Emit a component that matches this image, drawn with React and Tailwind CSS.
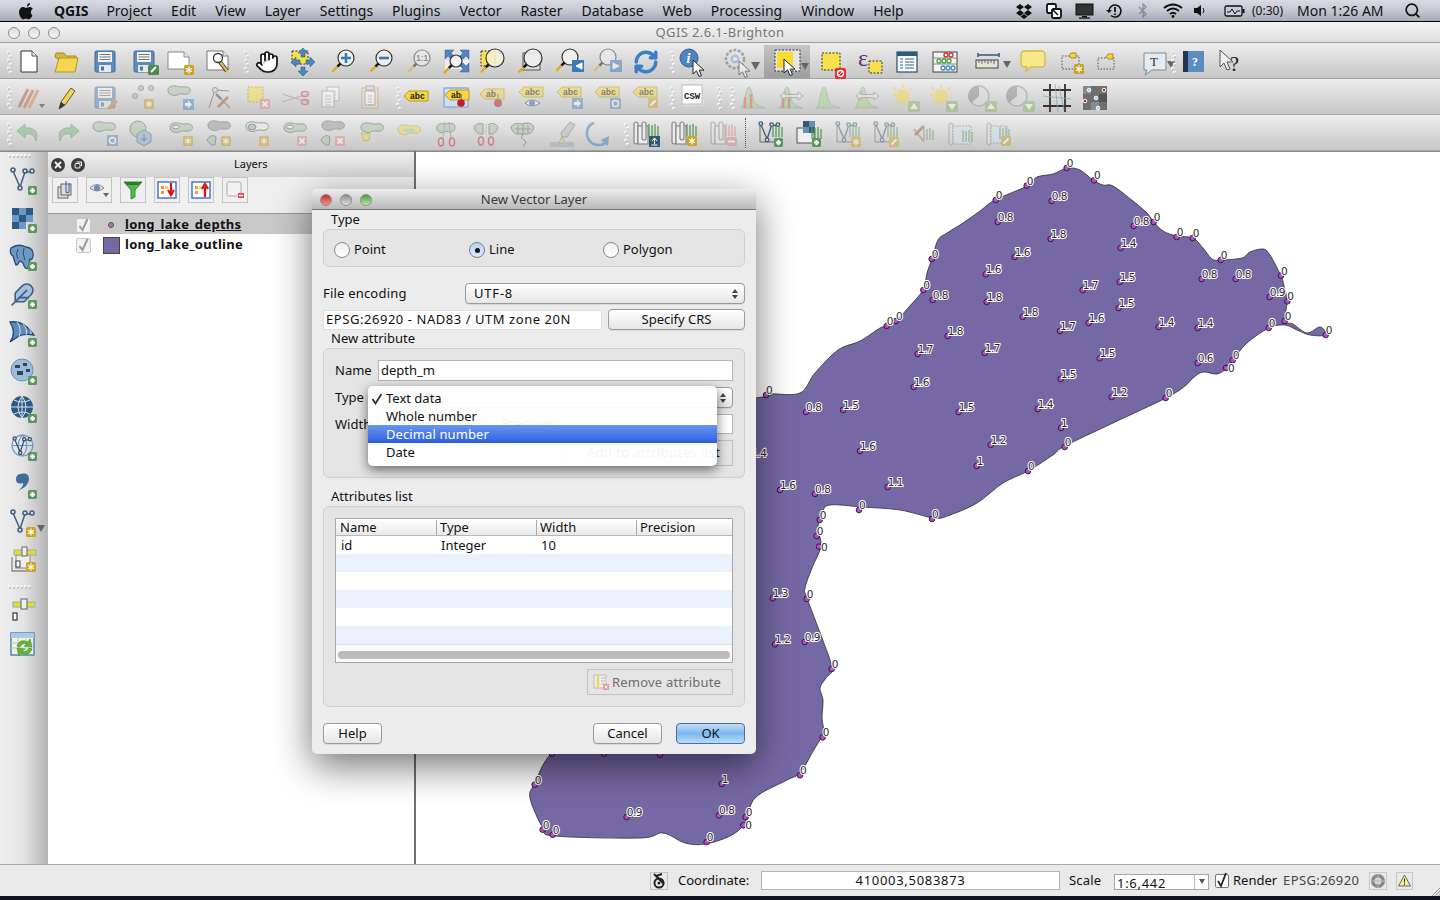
import React from 'react';
import { Hand, Feather, Globe, RefreshCw, Search } from 'lucide-react';

const Ic = ({ o, children }) => (
  <svg width="32" height="32" viewBox="0 0 32 32" className={o ? 'overflow-visible opacity-50' : 'overflow-visible'}>{children}</svg>
);
const It = ({ m = 'ml-[6px]', children }) => <div className={`w-[32px] h-[32px] flex-none ${m}`}>{children}</div>;
const Grip = ({ m = '' }) => (
  <svg width="6" height="24" viewBox="0 0 6 24" className={`flex-none ${m}`}>
    {[1, 5, 9, 13, 17, 21].map((y) => <g key={y}><rect x={y % 8 === 1 ? 0 : 2} y={y} width="3" height="2.4" fill="#f7f7f7" /><rect x={y % 8 === 1 ? 1 : 3} y={y + 1.6} width="2" height="1" fill="#aaa" /></g>)}
  </svg>
);
const Tr = ({ x = 0, y = 0, children }) => <g transform={`translate(${x} ${y})`}>{children}</g>;
const BP = ({ x = 21, y = 21 }) => <Tr x={x} y={y}><rect width="9" height="9" rx="1.5" fill="#5c965c" /><path d="M4.5 2v5M2 4.5h5" stroke="#fff" strokeWidth="2" /></Tr>;
const BS = ({ x = 20, y = 20 }) => <Tr x={x} y={y}><rect width="10" height="10" rx="1.5" fill="#cda323" /><path d="M5 1.5v7M2 3.2l6 3.6M8 3.2L2 6.8" stroke="#fff" strokeWidth="1.2" /></Tr>;
const BX = ({ x = 20, y = 20 }) => <Tr x={x} y={y}><rect width="10" height="10" fill="#e58d8d" /><path d="M2.5 2.5l5 5M7.5 2.5l-5 5" stroke="#fff" strokeWidth="1.8" /></Tr>;
const BA = ({ x = 20, y = 20, d = 1, c = '#5a8fc6' }) => <Tr x={x} y={y}><rect width="11" height="11" fill={c} /><path d={d > 0 ? 'M2 4h3V1.5l4 4-4 4V7H2z' : 'M9 4H6V1.5l-4 4 4 4V7h3z'} fill="#fff" /></Tr>;
const BE = ({ x = 20, y = 20, c = '#d5b863' }) => <Tr x={x} y={y}><rect width="10" height="10" rx="1" fill={c} /><path d="M2.5 7.5l5-5" stroke="#fff" strokeWidth="2" /></Tr>;
const Mag = ({ cx = 19, cy = 12, r = 8, f = '#f2f2f2', s = '#333' }) => {
  const X = Number(cx) - Number(r) * 0.7;
  const Y = Number(cy) + Number(r) * 0.7;
  return (
    <g>
      <circle cx={cx} cy={cy} r={r} fill={f} fillOpacity=".85" stroke={s} strokeWidth="1.2" />
      <path d={`M${X} ${Y}L${X - 3} ${Y + 3}`} stroke="#111" strokeWidth="2.6" />
      <path d={`M${X - 3} ${Y + 3}L${X - 8} ${Y + 8}`} stroke="#e3a922" strokeWidth="2.6" />
    </g>
  );
};
const Floppy = ({ c = '#5c8bbd' }) => (
  <g>
    <rect x="6" y="5" width="20" height="21" rx="1.5" fill={c} stroke="#3e6a98" />
    <rect x="9" y="6" width="14" height="10" fill="#f4f4f4" />
    <path d="M10.5 8.5h11M10.5 11h11M10.5 13.500h11" stroke="#777" />
    <rect x="10" y="19" width="12" height="7" fill="#e8e8e8" />
    <rect x="12" y="20.500" width="3" height="4" fill="#4a78a8" />
  </g>
);
const Cursor = ({ x = 14, y = 12, s = 1 }) => <g transform={`translate(${x} ${y}) scale(${s})`}><path d="M0 0v14l3.500-3.200L6 16.500l2.500-1-2.400-5.300H11z" fill="#fff" stroke="#222" strokeWidth="1" /></g>;
const Arrow = ({ x = 34, y = 17 }) => <path d={`M${x - 4} ${y}h8l-4 7z`} fill="#666" />;
const Dashed = ({ x = 6, y = 6, w = 18, h = 18, f = '#f7e14b', c = '#333' }) => <rect x={x} y={y} width={w} height={h} fill={f} stroke={c} strokeDasharray="2 1.500" />;
const Blob = ({ x = 2, y = 4, f = '#a7cba2', s = '#666' }) => <Tr x={x} y={y}><path d="M1 5C1 1 7 0 11 1.500C15 3 21 0 23 4C25 8 20 10 16 9C12 8 9 12 5 10C2 9 1 8 1 5Z" fill={f} stroke={s} /></Tr>;
const Tag = ({ t = 'abc', f = '#f6d741', x = 2, y = 9, c = '#222' }) => (
  <Tr x={x} y={y}>
    <path d="M0 5l5-5h19v10H5z" fill={f} stroke="#b99b20" />
    <text x="6" y="8.200" fontSize="8.500" fontWeight="700" fill={c} fontFamily="Liberation Sans">{t}</text>
  </Tr>
);
const Vee = ({ x = 4, y = 2, c = '#3f5f80', s = 1 }) => (
  <g transform={`translate(${x} ${y}) scale(${s})`} fill="none" stroke={c} strokeWidth="1.500">
    <path d="M2 4l7 16L14 5h6" />
    <circle cx="2" cy="3" r="2" fill="#ddd" /><circle cx="9" cy="21" r="2" fill="#ddd" /><circle cx="14" cy="4" r="2" fill="#ddd" /><circle cx="21" cy="4" r="2" fill="#ddd" />
  </g>
);
const Roll = ({ c = '#888' }) => (
  <g fill="#e8e8e8" stroke={c} strokeWidth="1.200">
    <rect x="5" y="4" width="4" height="22" rx="2" /><rect x="9" y="8" width="10" height="18" fill="#eee" /><rect x="13" y="4" width="4" height="18" rx="2" />
  </g>
);
const Grass = ({ x = 19, y = 6, c = '#5b9a5b' }) => <path transform={`translate(${x} ${y})`} d="M1 0v12M4 1v11M7 0v12M10 2v10" stroke={c} strokeWidth="1.300" />;
const Hist = ({ r }) => (
  <g>
    <path d="M4 26C8 26 8 5 12 5C15 5 15 18 18 21C20 24 24 25 28 26Z" fill="#a7d58e" stroke="#8a9" />
    {r && <path d="M8 15v11M14 12v14" stroke="#dc6050" strokeWidth="2.500" />}
  </g>
);
const HArrow = () => <path d="M5 14l5-4v2.500h13V10l5 4-5 4v-2.500H10V18z" fill="#eee" fillOpacity=".8" stroke="#888" />;
const Sun = ({ up }) => (
  <g>
    <g stroke="#f3d54a" strokeWidth="1.800"><path d="M14 2v4M14 22v3M3 13h4M4 5l3 3M24 5l-3 3M5 21l3-3" /></g>
    <circle cx="14" cy="14" r="7" fill="#f5d84a" />
    <rect x="19" y="19" width="12" height="11" rx="1.500" fill="#8fb96f" />
    <path d={up ? 'M25 21l4 6h-8z' : 'M25 28l4-6h-8z'} fill="#fff" />
  </g>
);
const Contrast = ({ up }) => (
  <g>
    <circle cx="13" cy="14" r="10" fill="#ddd" stroke="#999" strokeWidth="1.500" />
    <path d="M13 14L5 21A10 10 0 0 1 13 4z" fill="#888" />
    <rect x="19" y="19" width="12" height="11" rx="1.500" fill="#8fb96f" />
    <path d={up ? 'M25 21l4 6h-8z' : 'M25 28l4-6h-8z'} fill="#fff" />
  </g>
);
const Scissors = ({ x = 0, y = 0, c = '#d05050' }) => (
  <Tr x={x} y={y}>
    <path d="M2 6l26 8M2 14l26-8" stroke="#999" strokeWidth="1.300" />
    <ellipse cx="25" cy="6" rx="3.500" ry="2.500" fill="none" stroke={c} strokeWidth="1.500" /><ellipse cx="25" cy="14" rx="3.500" ry="2.500" fill="none" stroke={c} strokeWidth="1.500" />
  </Tr>
);
const DocLines = ({ x = 0, y = 0, w = 14, h = 18, c = '#999' }) => (
  <Tr x={x} y={y}><rect width={w} height={h} fill="#fff" stroke={c} /><path d={`M3 5h${w - 6}M3 8h${w - 6}M3 11h${w - 6}M3 14h${w - 6}`} stroke={c} strokeWidth=".8" /></Tr>
);

const R1 = [
  ['ml-0', <Ic><path d="M8 5h11l5 5v16H8z" fill="#fff" stroke="#333" /><path d="M19 5v5h5" fill="#eee" stroke="#555" /></Ic>],
  ['ml-[5px]', <Ic><path d="M5 11l1-4h8l2 3h10v3H8z" fill="#d9b93a" stroke="#a88c20" /><path d="M9 12h19l-3 14H5z" fill="#f6d650" stroke="#b3951f" /></Ic>],
  ['ml-[7px]', <Ic><Floppy /></Ic>],
  ['ml-[7px]', <Ic><Floppy /><rect x="20" y="19" width="11" height="10" rx="1.500" fill="#4d8b4d" /><path d="M23 26l5-5" stroke="#fff" strokeWidth="2" /></Ic>],
  ['ml-[5px]', <Ic><path d="M3 6h16l5 5v12H3z" fill="#fff" stroke="#888" /><path d="M19 6v5h5" fill="#eee" stroke="#888" /><BS x="19" y="19" /></Ic>],
  ['ml-[6px]', <Ic><path d="M4 5h16l5 5v14H4z" fill="#fff" stroke="#777" /><path d="M20 5v5h5" fill="#eee" stroke="#777" /><circle cx="15" cy="12" r="4.500" fill="none" stroke="#333" strokeWidth="1.300" /><path d="M17 16l7 9" stroke="#333" strokeWidth="4" /><path d="M17.500 16.500l7 9" stroke="#e0bb5a" strokeWidth="2.400" /></Ic>],
  'g:ml-[9px]',
  ['ml-0', <Ic><Hand x="5" y="4" width="24" height="24" fill="#fff" stroke="#111" strokeWidth="1.700" /></Ic>],
  ['ml-[5px]', <Ic><Dashed x="5" y="5" w="16" h="13" /><g fill="#4f86c0" stroke="#2e5f94" strokeWidth=".6"><path d="M16 2l5 5h-3v4h-4V7h-3z" /><path d="M16 30l-5-5h3v-4h4v4h3z" /><path d="M4 16l5-5v3h4v4H9v3z" /><path d="M28 16l-5-5v3h-4v4h4v3z" /></g></Ic>],
  ['ml-[7px]', <Ic><Mag cx="20" cy="12" r="8" /><path d="M15 12h10M20 7v10" stroke="#3a78b8" strokeWidth="2.600" /></Ic>],
  ['ml-[6px]', <Ic><Mag cx="20" cy="12" r="8" /><path d="M15 12h10" stroke="#3a78b8" strokeWidth="2.600" /></Ic>],
  ['ml-[6px]', <Ic o><Mag cx="20" cy="12" r="8" /><text x="14" y="15" fontSize="8.500" fontWeight="700" fill="#444" fontFamily="Liberation Sans">1:1</text></Ic>],
  ['ml-[7px]', <Ic><path d="M11 8h10v6h7v9H4v-9h7z" fill="#eee" /><g fill="#4f86c0" stroke="#2f6094" strokeWidth=".5"><path d="M4 4h9l-3 3 3 3-3 3-3-3-3 3z" /><path d="M28 4h-9l3 3-3 3 3 3 3-3 3 3z" /><path d="M28 26h-9l3-3-3-3 3-3 3 3 3-3z" /></g><Mag cx="15" cy="15" r="6" /></Ic>],
  ['ml-[5px]', <Ic><Dashed x="3" y="5" w="14" h="15" /><Mag cx="17" cy="12" r="9" f="#f6f3d8" /></Ic>],
  ['ml-[6px]', <Ic><rect x="7" y="7" width="17" height="17" fill="#ddd" stroke="#555" /><Mag cx="17" cy="12" r="9" f="#eee" /></Ic>],
  ['ml-[6px]', <Ic><Mag cx="16" cy="11" r="8" /><rect x="18" y="14" width="12" height="12" fill="#3f7ab8" /><path d="M28 17l-6 3 6 3z" fill="#fff" stroke="#fff" /></Ic>],
  ['ml-[6px]', <Ic o><Mag cx="16" cy="11" r="8" /><rect x="18" y="14" width="12" height="12" fill="#3f7ab8" /><path d="M21 17l6 3-6 3z" fill="#fff" stroke="#fff" /></Ic>],
  ['ml-[6px]', <Ic><RefreshCw x="3" y="3" width="26" height="26" stroke="#3a80c8" strokeWidth="3.200" /></Ic>],
  'g:ml-[8px]',
  ['ml-px', <Ic><circle cx="12" cy="12" r="9" fill="#4f84be" stroke="#2e5f94" /><text x="9.500" y="17" fontSize="14" fontWeight="700" fontStyle="italic" fill="#fff" fontFamily="Liberation Serif">i</text><Cursor x="16" y="14" /></Ic>],
  ['ml-[12px]', <><Ic o><circle cx="14" cy="13" r="9" fill="#dde6f0" stroke="#666" strokeWidth="2.500" strokeDasharray="3 1.500" /><circle cx="14" cy="13" r="4.500" fill="#7ea8d2" /><path d="M12.500 10.500l4.500 2.500-4.500 2.500z" fill="#fff" /><Cursor x="18" y="15" /></Ic><svg width="1" height="1" className="overflow-visible -mt-[16px] ml-[30px] block"><path d="M0 0h9l-4.500 8z" fill="#666" /></svg></>],
];
const R1b = [
  ['ml-[6px]', <Ic><Dashed x="6" y="7" w="18" h="17" /><rect x="19" y="22" width="11" height="11" fill="#d33" rx="1.500" /><circle cx="24.500" cy="27.500" r="3" fill="none" stroke="#fff" strokeWidth="1.300" /><path d="M22.500 29.500l4-4" stroke="#fff" /></Ic>],
  ['ml-[6px]', <Ic><text x="4" y="20" fontSize="24" fontStyle="normal" fill="#6a2c80" fontFamily="Liberation Serif">ε</text><Dashed x="15" y="15" w="13" h="12" /></Ic>],
  ['ml-[5px]', <Ic><rect x="6" y="6" width="20" height="20" fill="#fff" stroke="#2f5a80" strokeWidth="1.300" /><rect x="6" y="6" width="20" height="4" fill="#2f5a80" /><path d="M9 13h3M9 16h3M9 19h3M9 22h3M14 13h9M14 16h9M14 19h9M14 22h9" stroke="#2f5a80" /></Ic>],
  ['ml-[6px]', <Ic><rect x="4" y="6" width="24" height="20" fill="#f3f3f3" stroke="#444" /><path d="M4 12h24M4 18h24" stroke="#888" /><g fill="none" strokeWidth="1.300"><g stroke="#c33"><circle cx="17" cy="9" r="2" /><circle cx="22" cy="9" r="2" /></g><g stroke="#4a4"><circle cx="10" cy="15" r="2" /><circle cx="15" cy="15" r="2" /><circle cx="20" cy="15" r="2" /></g><g stroke="#48c"><circle cx="14" cy="22" r="2" /><circle cx="19" cy="22" r="2" /><circle cx="24" cy="22" r="2" /></g></g></Ic>],
  ['ml-[12px]', <Ic><path d="M5 9h21M5 7v4M26 7v4" stroke="#2f5a80" strokeWidth="1.500" /><rect x="3" y="14" width="22" height="8" fill="#e6e6d8" stroke="#444" /><path d="M6 14v3M9 14v4M12 14v3M15 14v4M18 14v3M21 14v4" stroke="#444" strokeWidth=".8" /><Arrow x="34" y="15" /></Ic>],
  ['ml-[12px]', <Ic><path d="M8 5h16q4 0 4 4v8q0 4-4 4H14l-5 4 1-4H8q-4 0-4-4V9q0-4 4-4z" fill="#f9e88b" stroke="#d4b84a" strokeWidth="1.300" /></Ic>],
  ['ml-[8px]', <Ic><rect x="5" y="10" width="17" height="13" fill="none" stroke="#555" strokeDasharray="1.500 1.500" /><path d="M14 7h5v5h-5l-2-2z" fill="#f5d435" stroke="#a88c20" /><BS x="17" y="18" /></Ic>],
  ['ml-[3px]', <Ic><rect x="6" y="12" width="16" height="11" fill="none" stroke="#555" strokeDasharray="1.500 1.500" /><path d="M16 8h5v5h-5l-2-2z" fill="#f5d435" stroke="#a88c20" /></Ic>],
  ['ml-[15px]', <Ic><path d="M5 7h22v17H13l-7 5 2-5H5z" fill="#e2ecf2" stroke="#888" /><text x="11" y="20" fontSize="13" fill="#333" fontFamily="Liberation Serif">T</text><Arrow x="32" y="15" /></Ic>],
  'g:ml-[13px]',
  ['ml-0', <Ic><rect x="6" y="5" width="21" height="21" fill="#5c8bbd" /><rect x="6" y="5" width="5" height="21" fill="#1f3550" /><text x="15" y="20" fontSize="12" fontWeight="700" fill="#fff" fontFamily="Liberation Serif">?</text></Ic>],
  ['ml-[6px]', <Ic><path d="M5 4v17l4-4 3 7 3-1-3-7h6z" fill="#eee" stroke="#555" /><text x="15" y="25" fontSize="20" fill="#111" fontFamily="Liberation Serif">?</text></Ic>],
];
const R2 = [
  ['ml-px', <Ic o><g strokeWidth="3"><path d="M5 25L14 7" stroke="#a64" /><path d="M10 26L19 8" stroke="#c63" /><path d="M15 26L24 8" stroke="#d84" /></g><path d="M25 22h6l-3 4z" fill="#333" /></Ic>],
  ['ml-[4px]', <Ic><path d="M9 27l2-7L21 6l4 3-10 14z" fill="#f5d64a" stroke="#554" /><path d="M9 27l2-7 4 3z" fill="#333" /></Ic>],
  ['ml-[7px]', <Ic o><Floppy /><path d="M18 26l8-9 3 3-8 8z" fill="#d87a3a" /></Ic>],
  ['ml-[6px]', <Ic o><g fill="#a7cba2" stroke="#667"><circle cx="14" cy="6" r="2.500" /><circle cx="24" cy="6" r="2.500" /><circle cx="8" cy="14" r="2.500" /></g><BS x="17" y="17" /></Ic>],
  ['ml-[6px]', <Ic o><Blob x="2" y="3" /><BA x="18" y="17" /></Ic>],
  ['ml-[7px]', <Ic o><path d="M5 26L11 8l14 1" stroke="#555" fill="none" /><circle cx="11" cy="8" r="2.500" fill="#ddd" stroke="#555" /><path d="M14 14l12 12" stroke="#a86" strokeWidth="2" /><path d="M24 15L14 25" stroke="#963" strokeWidth="2.500" /><path d="M12 12l5 5" stroke="#555" strokeWidth="2.500" /></Ic>],
  ['ml-[7px]', <Ic o><Dashed x="5" y="5" w="15" h="15" c="#b58d20" /><BX x="17" y="17" /></Ic>],
  ['ml-[4px]', <Ic o><Scissors x="1" y="6" /></Ic>],
  ['ml-[5px]', <Ic o><DocLines x="11" y="5" w="12" h="14" /><DocLines x="6" y="9" w="12" h="16" /></Ic>],
  ['ml-[7px]', <Ic o><rect x="7" y="6" width="16" height="20" fill="#f1e0c4" stroke="#c49755" /><rect x="11" y="4" width="8" height="4" fill="#ddd" stroke="#a77" /><DocLines x="10" y="9" w="10" h="14" c="#888" /></Ic>],
  'g:ml-[9px]',
  ['ml-0', <Ic><Tag /></Ic>],
  ['ml-[6px]', <Ic><rect x="4" y="6" width="24" height="19" fill="#cddff2" stroke="#6b9ccc" /><Tag t="ab" x="5" y="8" /><circle cx="21" cy="21" r="3.800" fill="#bf1e2e" /><path d="M21 12v6" stroke="#777" strokeWidth="1.500" /></Ic>],
  ['ml-[5px]', <Ic o><Tag t="ab" x="3" y="7" /><circle cx="21" cy="21" r="4" fill="#bf1e2e" /><path d="M21 12v6" stroke="#777" strokeWidth="1.500" /></Ic>],
  ['ml-[7px]', <Ic o><Tag x="3" y="5" /><path d="M9 21q7-6 15 0q-8 6-15 0z" fill="#fff" stroke="#555" /><circle cx="16" cy="21" r="3" fill="#3a78b8" /></Ic>],
  ['ml-[6px]', <Ic o><Tag x="3" y="5" /><BA x="18" y="16" /></Ic>],
  ['ml-[6px]', <Ic o><Tag x="3" y="5" /><rect x="18" y="16" width="11" height="11" fill="#5a8fc6" /><circle cx="23.500" cy="21.500" r="3" fill="none" stroke="#fff" strokeWidth="1.500" /></Ic>],
  ['ml-[6px]', <Ic o><Tag x="3" y="5" /><BE x="18" y="16" c="#d5a63a" /></Ic>],
  'g:ml-[8px]',
  ['ml-px', <Ic><rect x="7" y="5" width="20" height="19" fill="#ddd" /><rect x="5" y="3" width="20" height="19" fill="#fff" stroke="#bbb" /><text x="7" y="17" fontSize="9" fontWeight="700" fill="#222" fontFamily="Liberation Mono">CSW</text></Ic>],
  'g:ml-[8px]',
  'g:ml-[7px]',
  ['ml-px', <Ic o><Hist r /></Ic>],
  ['ml-[6px]', <Ic o><Hist r /><HArrow /></Ic>],
  ['ml-[5px]', <Ic o><Hist /></Ic>],
  ['ml-[7px]', <Ic o><Hist /><HArrow /></Ic>],
  ['ml-[6px]', <Ic o><Sun up /></Ic>],
  ['ml-[6px]', <Ic o><Sun /></Ic>],
  ['ml-[7px]', <Ic o><Contrast up /></Ic>],
  ['ml-[6px]', <Ic o><Contrast /></Ic>],
  ['ml-[5px]', <Ic><path d="M2 8h28M2 24h28M9 2v28M24 2v28" stroke="#333" strokeWidth="1.800" /><path d="M2 14l28 3M14 2l3 28M18 4l5 24" stroke="#8ab" strokeWidth=".8" /></Ic>],
  ['ml-[6px]', <Ic><rect x="4" y="4" width="24" height="24" fill="#6e6e6e" /><rect x="4" y="4" width="8" height="8" fill="#888" /><rect x="20" y="12" width="8" height="8" fill="#555" /><rect x="12" y="20" width="8" height="8" fill="#8a8a8a" /><g strokeWidth="1"><circle cx="10" cy="8" r="1.800" fill="#9cf" stroke="#fff" /><circle cx="25" cy="8" r="1.800" fill="#c11" stroke="#fff" /><circle cx="17" cy="16" r="1.800" fill="#9cf" stroke="#fff" /><circle cx="6" cy="19" r="1.800" fill="#c11" stroke="#fff" /><circle cx="19" cy="26" r="1.800" fill="#9cf" stroke="#fff" /></g></Ic>],
];
const Ring = ({ x = 4, y = 4 }) => <Blob x={x} y={y} />;
const R3 = [
  ['ml-0', <Ic o><path d="M12 6L4 13l8 7v-4c6-1 10 1 11 7 3-9-2-14-11-13z" fill="#7db87d" stroke="#5a9a5a" /></Ic>],
  ['ml-[6px]', <Ic o><path d="M20 6l8 7-8 7v-4c-6-1-10 1-11 7-3-9 2-14 11-13z" fill="#7db87d" stroke="#5a9a5a" /></Ic>],
  ['ml-[6px]', <Ic o><Ring x="3" y="3" /><rect x="18" y="17" width="11" height="11" fill="#5a8fc6" /><circle cx="23.500" cy="22.500" r="3" fill="none" stroke="#fff" strokeWidth="1.500" /></Ic>],
  ['ml-[6px]', <Ic o><circle cx="11" cy="11" r="8" fill="#a7cba2" stroke="#667" /><path d="M17 12l7 4v8l-7 4-7-4v-8z" fill="#8db4d8" stroke="#567" /><path d="M17 16v7M14 20l3 3 3-3" stroke="#345" fill="none" /></Ic>],
  ['ml-[6px]', <Ic o><Ring x="4" y="4" /><ellipse cx="11" cy="9" rx="3.500" ry="2" fill="#eee" stroke="#555" /><BS x="18" y="18" /></Ic>],
  ['ml-[6px]', <Ic o><Blob x="4" y="2" f="#999" /><path d="M4 22q4-7 9-3l-1 8q-5 1-8-5z" fill="#a7cba2" stroke="#666" /><BS x="18" y="18" /></Ic>],
  ['ml-[6px]', <Ic o><Blob x="4" y="3" f="#eee" s="#555" /><ellipse cx="11" cy="9" rx="4" ry="3" fill="#8fbc8f" stroke="#555" /><BS x="18" y="18" /></Ic>],
  ['ml-[6px]', <Ic o><Ring x="4" y="4" /><ellipse cx="11" cy="9" rx="3.500" ry="2" fill="#eee" stroke="#555" /><BX x="18" y="18" /></Ic>],
  ['ml-[6px]', <Ic o><Blob x="4" y="2" f="#999" /><path d="M4 22q4-7 9-3l-1 8q-5 1-8-5z" fill="#a7cba2" stroke="#666" /><BX x="18" y="18" /></Ic>],
  ['ml-[7px]', <Ic o><Blob x="4" y="4" /><path d="M5 15q5 3 9 0l-1 7-5 1z" fill="#f4dc4f" stroke="#b99b20" /></Ic>],
  ['ml-[5px]', <Ic o><Blob x="4" y="6" f="#f4dc4f" s="#aa8" /><path d="M9 12q8-4 14 0q-4 5-14 0z" fill="#a7cba2" /></Ic>],
  ['ml-[6px]', <Ic o><path d="M6 12q-2-8 9-6q10-3 9 5q-3 5-9 2q-5 4-9-1z" fill="#a7cba2" stroke="#666" /><path d="M14 4l-2 16M18 4l2 16" stroke="#888" /><ellipse cx="10" cy="24" rx="2.500" ry="4" fill="none" stroke="#c33" strokeWidth="1.500" /><ellipse cx="21" cy="24" rx="2.500" ry="4" fill="none" stroke="#c33" strokeWidth="1.500" /></Ic>],
  ['ml-[7px]', <Ic o><path d="M4 9q3-5 9-3v10q-7 1-9-7zM19 6q6-2 9 3q-2 8-9 7z" fill="#a7cba2" stroke="#666" /><path d="M16 6v10" stroke="#888" strokeDasharray="2 1" /><ellipse cx="11" cy="23" rx="2.500" ry="4" fill="none" stroke="#c33" strokeWidth="1.500" /><ellipse cx="21" cy="23" rx="2.500" ry="4" fill="none" stroke="#c33" strokeWidth="1.500" /></Ic>],
  ['ml-[5px]', <Ic o><path d="M4 9q3-5 11-3q9-3 12 3q-2 8-9 7h-5q-7 1-9-7z" fill="#a7cba2" stroke="#555" /><path d="M11 7v8M16 6v10M21 7v8M8 11h16" stroke="#666" /><path d="M16 16q-3 4 1 6t-1 6" fill="none" stroke="#555" /></Ic>],
  ['ml-[7px]', <Ic o><path d="M24 4l5 3-8 12h-5l-1-4z" fill="#bbb" stroke="#777" /><path d="M16 19l3 6h-6z" fill="#f4dc4f" stroke="#888" /><path d="M4 24h8l4 3 4-3h8v5H4z" fill="#9ab" /></Ic>],
  ['ml-[4px]', <Ic o><path d="M12 5C5 7 3 16 7 22s14 7 18 1" fill="none" stroke="#3a80c8" strokeWidth="2.600" /><path d="M19 22l8-4-1 10z" fill="#3a80c8" /></Ic>],
  'g:ml-[10px]',
  ['-ml-px', <Ic><Roll /><Grass /><rect x="20" y="18" width="11" height="11" fill="#2f5a72" /><path d="M25.500 20v6M23 23l2.500-3 2.500 3M22.500 27h6" stroke="#fff" fill="none" /></Ic>],
  ['ml-[6px]', <Ic><Roll /><Grass /><BS x="20" y="18" /></Ic>],
  ['ml-[7px]', <Ic o><Roll /><Grass c="#d77" /><rect x="20" y="19" width="11" height="9" rx="2" fill="#d88" /><path d="M22 23.500h7" stroke="#fff" strokeWidth="2" /></Ic>],
];
const R3b = [
  ['ml-[8px]', <Ic><path d="M6 8v16h17" stroke="#666" fill="none" /><Vee x="5" y="3" s=".9" /><Grass x="18" y="7" /><BP x="20" y="20" /></Ic>],
  ['ml-[6px]', <Ic><rect x="5" y="10" width="17" height="15" fill="#eee" stroke="#555" /><g fill="#2f5a80"><rect x="11" y="3" width="6" height="6" /><rect x="17" y="9" width="6" height="6" /></g><g fill="#6b8eb0"><rect x="17" y="3" width="6" height="6" /><rect x="11" y="9" width="6" height="6" /></g><Grass x="19" y="9" /><BP x="20" y="20" /></Ic>],
  ['ml-[7px]', <Ic o><path d="M6 8v16h17" stroke="#666" fill="none" /><Vee x="5" y="3" s=".9" /><Grass x="18" y="7" /><BS x="20" y="19" /></Ic>],
  ['ml-[6px]', <Ic o><path d="M6 8v16h17" stroke="#666" fill="none" /><Vee x="5" y="3" s=".9" /><Grass x="18" y="7" /><BE x="20" y="19" c="#d5a63a" /></Ic>],
  ['ml-[6px]', <Ic o><path d="M7 11l10 13" stroke="#a86" strokeWidth="2" /><path d="M17 8L8 17" stroke="#963" strokeWidth="3" /><Grass x="16" y="10" /></Ic>],
  ['ml-[5px]', <Ic o><rect x="5" y="5" width="4" height="22" rx="2" fill="#ddd" stroke="#888" /><rect x="9" y="8" width="18" height="18" fill="#cfe3f5" stroke="#888" strokeDasharray="2 1" /><Grass x="18" y="12" /></Ic>],
  ['ml-[6px]', <Ic o><rect x="5" y="5" width="4" height="22" rx="2" fill="#ddd" stroke="#888" /><rect x="9" y="8" width="16" height="17" fill="#cfe3f5" stroke="#888" strokeDasharray="2 1" /><Grass x="17" y="9" /><BE x="19" y="18" c="#c9a227" /></Ic>],
];
const Left = [
  <Ic><Vee x="4" y="2" /><BP /></Ic>,
  <Ic><g fill="#2f5a80"><rect x="5" y="5" width="7" height="7" /><rect x="19" y="5" width="7" height="7" /><rect x="12" y="12" width="7" height="7" /><rect x="5" y="19" width="7" height="7" /></g><g fill="#6b98c6"><rect x="12" y="5" width="7" height="7" /><rect x="5" y="12" width="7" height="7" /><rect x="19" y="12" width="7" height="7" /><rect x="12" y="19" width="7" height="7" /></g><BP /></Ic>,
  <Ic><path d="M4 7q7-5 15-1q8 1 7 9q-1 5-3 3l-2 9q-3 2-5-5q-3-3-4-1-1 3-3 3-2-5-3-9-4-2-2-8z" fill="#6b98c6" stroke="#2e4d6e" strokeWidth="1.300" /><path d="M11 8q-3 5 0 10M17 7q-2 6 1 12" stroke="#2e4d6e" fill="none" /><BP /></Ic>,
  <Ic><Feather x="3" y="3" width="25" height="25" fill="#9fc0de" stroke="#3f5f80" strokeWidth="1.500" /><BP /></Ic>,
  <Ic><path d="M3 5q14-2 24 13q-12-2-18 3l-6 4q7-9 0-20z" fill="#5d8ab8" stroke="#244a70" strokeWidth="1.300" /><path d="M10 5q5 6 2 15M16 7q5 5 3 11M22 11q3 3 2 6" stroke="#cde" fill="none" /><BP /></Ic>,
  <Ic><circle cx="15" cy="15" r="11" fill="#9cbcdc" stroke="#6b8fb3" /><path d="M8 10h5v3H8zM16 8h4v3h-4zM10 16h6v4h-6zM19 14h4v3h-4z" fill="#345" /><BP /></Ic>,
  <Ic><circle cx="15" cy="14" r="11" fill="#2f5a80" /><path d="M4 14h22M15 3v22M7 7q8 4 16 0M7 21q8-4 16 0M15 3q-8 11 0 22M15 3q8 11 0 22" stroke="#cfe0f0" fill="none" /><BP /></Ic>,
  <Ic><Globe x="3" y="2" width="25" height="25" stroke="#6b98c6" strokeWidth="1.100" /><Vee x="6" y="5" s=".8" c="#2e4d6e" /><BP /></Ic>,
  <Ic><path d="M13 5q9-2 9 5q0 7-11 12q6-5 5-8q-7 2-7-4q0-4 4-5z" fill="#3f6e9e" /><BP /></Ic>,
  <Ic><Vee x="4" y="2" /><BS x="19" y="20" /><Arrow x="34" y="18" /></Ic>,
  <Ic><path d="M5 12v14h15" fill="none" stroke="#888" strokeWidth="1.300" /><rect x="9" y="10" width="14" height="13" fill="#eee" stroke="#888" /><rect x="7" y="5" width="22" height="5" fill="#dcdc3c" stroke="#aa9" /><rect x="15" y="2" width="5" height="9" fill="#eee" stroke="#666" /><rect x="9" y="16" width="4" height="6" fill="#fff" stroke="#345" /><BS x="19" y="17" /></Ic>,
  <Ic><rect x="6" y="11" width="22" height="5" fill="#dcdc3c" stroke="#aa9" /><rect x="14" y="8" width="6" height="10" fill="#eee" stroke="#666" /><rect x="6" y="22" width="4" height="7" fill="#fff" stroke="#345" strokeWidth="1.300" /></Ic>,
  <Ic><rect x="4" y="4" width="23" height="22" fill="#f7f3d7" stroke="#4f86c0" strokeWidth="1.500" /><rect x="4" y="4" width="23" height="5" fill="#a9cbea" /><path d="M4 14h23M4 19h23M11 4v22M19 4v22" stroke="#a9cbea" /><path d="M10 17q3-8 11-4l2-3 2 8-8-1 3-2q-5-2-7 3zM25 20q-3 8-11 4l-2 3-2-8 8 1-3 2q5 2 7-3z" fill="#69b530" stroke="#3d8a1f" strokeWidth=".6" /></Ic>,
];
const Row = ({ children }) => (
  <div className="h-[36px] flex-none flex items-center pt-[3px] bg-linear-to-b from-[#ededed] to-[#c7c7c7] border-b border-[#a3a3a3]">
    <Grip m="ml-[7px]" />
    {children}
  </div>
);
const render = (a) => a.map((e, i) => typeof e === 'string' ? <Grip key={i} m={e.slice(2)} /> : <It key={i} m={e[0]}>{e[1]}</It>);

const Lights = ({ gray }) => {
  const cs = gray
    ? ['from-[#dcdcdc] to-[#f6f6f6]', 'from-[#dcdcdc] to-[#f6f6f6]', 'from-[#dcdcdc] to-[#f6f6f6]']
    : ['from-[#c12a2a] to-[#f5908a]', 'from-[#8c8c8c] to-[#e2e2e2]', 'from-[#4b9c3c] to-[#b6e99f]'];
  return <div className="flex gap-[8px] mt-[1px]">{cs.map((c, i) => <div key={i} className={`w-[12px] h-[12px] rounded-full border border-[#8e8e8e] bg-linear-to-b ${c}`} />)}</div>;
};
const Aqua = ({ cls = '', children }) => <div className={`flex items-center justify-center pt-[1px] rounded-[4px] border border-[#9a9a9a] bg-linear-to-b from-[#ffffff] via-[#f2f2f2] to-[#e6e6e6] shadow-[0_1px_0_rgba(0,0,0,.08)] ${cls}`}>{children}</div>;
const Updown = () => <svg width="8" height="12" viewBox="0 0 8 12"><path d="M4 1l3 4H1zM4 11L1 7h6z" fill="#444" /></svg>;
const Radio = ({ on }) => on
  ? <div className="w-[16px] h-[16px] rounded-full border border-[#6f7f99] bg-linear-to-b from-[#b8d2f0] to-[#dcecff] flex items-center justify-center"><div className="w-[5px] h-[5px] rounded-full bg-[#111]" /></div>
  : <div className="w-[16px] h-[16px] rounded-full border border-[#8a8a8a] bg-linear-to-b from-[#eeeeee] to-[#ffffff]" />;

const Zm = (X, Y) => [880 + X / 3, 155 + Y / 3];
const Zn = (X, Y) => [520 + X / 3, 490 + Y / 3];
const P1 = [['0',560,45],['0',642,82],['0',440,98],['0',347,141],['0.8',515,144],['0.8',353,207],['0.8',761,219],['0',821,207],['1.8',512,258],['0',890,252],['0',938,255],['1.4',722,285],['1.6',404,312],['0',155,318],['1.6',317,364],['0',1022,321],['0',1203,368],['1.5',719,387],['0.8',965,378],['0.8',1067,378],['1.7',608,411],['0',130,411],['0.8',158,441],['1.8',320,447],['0.9',1169,432],['0',1222,445],['1.5',716,465],['1.8',428,492],['0',48,504],['0',20,519],['0',1214,504],['1.6',626,510],['1.4',836,522],['1.4',953,525],['0',1166,525],['1.7',540,534],['1.8',203,549],['0',1337,546],['1.7',314,600],['1.7',113,603],['1.5',659,616],['0',1058,622],['0.6',953,630],['0',1038,645,1],['1.5',542,678],['1.6',101,702],['1.2',695,732],['0',857,735],['1.4',473,768],['1.5',236,777],['1',543,825],['1.2',332,876],['0',554,882],['1',290,939],['0',444,954],['1.1',23,1002]];
const P2 = [['0',899,96],['0',890,144],['0',897,176,1],['1.3',758,331],['0',860,333],['1.2',765,469],['0.9',854,462],['0',935,543],['0',908,748],['0',840,862],['1',605,888],['0',44,890],['0.9',320,987],['0.8',597,982],['0',677,987],['0',670,1012,1],['0',68,1025],['0',98,1040],['0',560,1062],['',96,797],['',252,797],['',420,800]];
const P3 = [['0',766,397],['0.8',806,414],['1.5',843,412],['1.6',860,453],['1.6',780,492],['0.8',815,496],['0',859,512],['0',932,521],['1.4',751,460]];
const PTS = [...P1.map(([l, x, y, b]) => [l, ...Zm(x, y), b]), ...P2.map(([l, x, y, b]) => [l, ...Zn(x, y), b]), ...P3];
const RAW = [[756,400],[770,396],[800,395],[815,375],[838,352],[860,343],[880,330],[887,328],[896,323],[908,310],[923,292],[927,275],[932,261],[938,242],[947,235],[963,225],[980,213],[995,202],[1027,188],[1037,179],[1053,176],[1067,170],[1080,172],[1093,182],[1103,187],[1113,188],[1133,203],[1147,215],[1153,223],[1163,233],[1177,238],[1193,240],[1203,250],[1212,261],[1221,262],[1242,260],[1250,254],[1263,251],[1270,257],[1281,278],[1284,288],[1287,303],[1285,323],[1293,326],[1307,335],[1320,329],[1326,337],[1310,337],[1297,332],[1285,327],[1269,330],[1247,345],[1233,362],[1227,370],[1217,376],[1203,374],[1193,380],[1185,388],[1166,400],[1113,425],[1065,448],[1053,457],[1028,473],[1003,485],[977,505],[950,517],[934,520],[900,512],[862,509],[830,507],[822,515],[818,530],[821,548],[812,570],[805,590],[807,600],[822,640],[832,670],[826,680],[820,690],[823,702],[822,720],[823,735],[812,755],[800,775],[785,783],[755,800],[745,825],[730,838],[705,846],[685,845],[663,835],[640,840],[555,838],[543,830],[530,800],[535,785],[552,755],[600,720],[600,420]];
const LAKE = (() => {
  const n = RAW.length;
  let d = `M${RAW[0][0]} ${RAW[0][1]}`;
  for (let i = 0; i < n; i++) {
    const [p0, p1, p2, p3] = [RAW[(i - 1 + n) % n], RAW[i], RAW[(i + 1) % n], RAW[(i + 2) % n]];
    const c1 = [p1[0] + (p2[0] - p0[0]) / 6, p1[1] + (p2[1] - p0[1]) / 6];
    const c2 = [p2[0] - (p3[0] - p1[0]) / 6, p2[1] - (p3[1] - p1[1]) / 6];
    d += `C${c1[0]} ${c1[1]} ${c2[0]} ${c2[1]} ${p2[0]} ${p2[1]}`;
  }
  return d + 'Z';
})();

const MapView = () => (
  <div className="flex-1 bg-white border-t border-[#8a8a8a]">
    <svg width="1024" height="710" viewBox="416 154 1024 710">
      <path d={LAKE} fill="#7569a5" stroke="#2e2a3a" strokeWidth=".8" strokeLinejoin="round" />
      {PTS.map(([l, x, y, b], i) => (
        <g key={i}>
          <circle cx={x} cy={y} r="2.800" fill="#b24fc0" stroke="#2a1030" strokeWidth=".9" />
          {l && <text x={b ? x + 2 : x} y={b ? y + 4 : y - 1} fontSize="10.500" fontFamily="DejaVu Sans" fill="#2a2a2a" stroke="#fff" strokeWidth="2" paintOrder="stroke" letterSpacing="-.4">{l}</text>}
        </g>
      ))}
    </svg>
  </div>
);

const DockBtn = ({ m = 'ml-[8px]', children }) => <div className={`w-[26px] h-[26px] border border-[#c4c4c4] flex items-center justify-center ${m}`}><svg width="22" height="22" viewBox="0 0 22 22">{children}</svg></div>;
const Check = () => <div className="w-[15px] h-[15px] border border-[#c8c8c8] rounded-[2px] bg-[#f2f2f2] flex items-center justify-center"><svg width="15" height="15" viewBox="0 0 15 15" className="overflow-visible"><path d="M3.500 8l3 4 5-11" fill="none" stroke="#999" strokeWidth="2" /></svg></div>;

const Panel = () => (
  <div className="w-[368px] flex-none bg-white border-r-2 border-[#707070] relative flex flex-col">
    <div className="h-[26px] flex items-center bg-linear-to-b from-[#efefef] to-[#d4d4d4] border-t border-[#8a8a8a] relative">
      <div className="ml-[3px] w-[14px] h-[14px] rounded-full bg-[#3c3c3c] flex items-center justify-center"><svg width="8" height="8" viewBox="0 0 8 8"><path d="M1 1l6 6M7 1L1 7" stroke="#fff" strokeWidth="1.800" /></svg></div>
      <div className="ml-[6px] w-[14px] h-[14px] rounded-full bg-[#3c3c3c] flex items-center justify-center"><svg width="8" height="8" viewBox="0 0 8 8"><rect x="1" y="2.500" width="5" height="4.500" rx="1" fill="none" stroke="#fff" /><path d="M2.500 1h5v4" fill="none" stroke="#fff" /></svg></div>
      <span className="absolute left-[186px] top-[4px] text-[11px] leading-[16px] text-[#111]">Layers</span>
    </div>
    <div className="h-[36px] flex bg-[#efefef]">
      <DockBtn m="ml-[4px]"><g fill="#ddd" stroke="#666"><rect x="4" y="8" width="10" height="11" /><rect x="7" y="5" width="10" height="11" /></g><path d="M12 2v11a2 2 0 0 0 3 0V4" fill="none" stroke="#4a78a8" strokeWidth="1.200" /></DockBtn>
      <DockBtn><path d="M2 9q7-7 14 0q-7 6-14 0z" fill="#dde" stroke="#889" /><circle cx="9" cy="9" r="3" fill="#6b8eb0" /><path d="M15 14h6l-3 4z" fill="#666" /></DockBtn>
      <DockBtn><path d="M2 3h18l-7 8v7l-4 2v-9z" fill="#57b54a" stroke="#3a8a34" /><path d="M2 3h18l-3 3H5z" fill="#2e7a2e" /></DockBtn>
      <DockBtn><rect x="2" y="3" width="18" height="16" fill="#fff" stroke="#4a78c8" strokeWidth="1.500" /><path d="M5 7h3v3H5zM5 12h3v3H5z" fill="#f59a2a" /><path d="M9 7h3v3H9z" fill="#ffd24a" /><path d="M15 4v10M12 11l3 5 3-5" stroke="#e01010" strokeWidth="2.200" fill="none" /></DockBtn>
      <DockBtn><rect x="2" y="3" width="18" height="16" fill="#fff" stroke="#4a78c8" strokeWidth="1.500" /><path d="M5 7h3v3H5zM5 12h3v3H5z" fill="#f59a2a" /><path d="M9 7h3v3H9z" fill="#ffd24a" /><path d="M15 18V8M12 10l3-5 3 5" stroke="#e01010" strokeWidth="2.200" fill="none" /></DockBtn>
      <DockBtn><rect x="3" y="3" width="14" height="14" rx="1.500" fill="#f2f2f2" stroke="#aaa" /><rect x="14" y="14" width="6" height="5" fill="#e84a5a" /><path d="M15 16.500h4" stroke="#fff" strokeWidth="1.200" /></DockBtn>
    </div>
    <div className="h-[21px] bg-[#c9c9c9] border-t border-[#999] flex items-center pl-[28px] pt-[2px]">
      <Check />
      <span className="ml-[17px] w-[6px] h-[6px] rounded-full bg-[#b26fc8] border border-[#553]" />
      <span className="ml-[11px] text-[13px] font-bold underline tracking-[.3px] text-[#111]">long_lake_depths</span>
    </div>
    <div className="h-[20px] flex items-center pl-[28px] pt-[2px]">
      <Check />
      <span className="ml-[12px] w-[17px] h-[17px] bg-[#7569a5] border border-[#444]" />
      <span className="ml-[5px] text-[13px] font-bold tracking-[.3px] text-[#111]">long_lake_outline</span>
    </div>
  </div>
);

const Group = ({ cls = '', children }) => <div className={`rounded-[6px] border border-[#cfcfcf] bg-[#e4e4e4] ${cls}`}>{children}</div>;
const Line = ({ cls = '', children }) => <div className={`border border-[#b5b5b5] bg-white flex items-center pt-[1px] ${cls}`}>{children}</div>;

const Dialog = () => (
  <div className="absolute left-[312px] top-[189px] w-[444px] h-[565px] rounded-[5px] bg-[#ececec] shadow-[0_12px_38px_rgba(0,0,0,.55)] text-[13px] text-[#111] flex flex-col overflow-visible">
    <div className="h-[21px] flex-none relative flex items-center pl-[8px] rounded-t-[5px] bg-linear-to-b from-[#ededed] to-[#b9b9b9] border-b border-[#777]">
      <Lights />
      <span className="absolute left-0 right-0 mt-[2px] text-center text-[13px] text-[#3a3a3a]">New Vector Layer</span>
    </div>
    <div className="px-[11px] flex flex-col">
      <div className="h-[19px] pl-[8px] leading-[18px]">Type</div>
      <Group cls="h-[38px] flex items-center pt-[4px]">
        <div className="ml-[10px] w-[135px] flex items-center gap-[4px]"><Radio /><span>Point</span></div>
        <div className="w-[134px] flex items-center gap-[4px]"><Radio on /><span>Line</span></div>
        <div className="flex items-center gap-[4px]"><Radio /><span>Polygon</span></div>
      </Group>
      <div className="mt-[16px] h-[21px] flex items-center">
        <span className="w-[142px] tracking-[.2px]">File encoding</span>
        <Aqua cls="w-[280px] h-[21px] !justify-between px-[8px] pr-[5px]"><span className="tracking-[.8px]">UTF-8</span><Updown /></Aqua>
      </div>
      <div className="mt-[5px] h-[21px] flex items-center justify-between">
        <div className="w-[279px] h-[20px] pt-[1px] bg-white border border-[#dedede] flex items-center pl-[2px] whitespace-nowrap tracking-[.55px]">EPSG:26920 - NAD83 / UTM zone 20N</div>
        <Aqua cls="w-[137px] h-[21px]">Specify CRS</Aqua>
      </div>
      <div className="h-[18px] pl-[8px] leading-[16px]">New attribute</div>
      <Group cls="h-[130px] relative px-[11px] pt-[11px] flex flex-col">
        <div className="h-[21px] flex items-center"><span className="w-[43px] pt-[1px]">Name</span><Line cls="flex-1 h-[21px] pl-[2px]">depth_m</Line></div>
        <div className="mt-[6px] h-[21px] flex items-center"><span className="w-[43px] pt-[1px]">Type</span><Aqua cls="flex-1 h-[21px] !justify-end pr-[5px]"><Updown /></Aqua></div>
        <div className="mt-[6px] h-[20px] flex items-center"><span className="w-[43px] pt-[1px]">Width</span><Line cls="w-[75px] h-[20px]" /><span className="ml-[49px] w-[53px]">Precision</span><Line cls="flex-1 h-[20px]" /></div>
        <div className="mt-[6px] self-end w-[169px] h-[26px] border border-[#bdbdbd] flex items-center justify-end pr-[12px] tracking-[.4px] whitespace-nowrap">Add to attributes list</div>
        <div className="absolute left-[44px] top-[37px] w-[349px] h-[80px] rounded-[5px] bg-white/95 shadow-[0_4px_12px_rgba(0,0,0,.55)] pt-[3px] text-[13px] z-10">
          <div className="h-[18px] pl-[18px] leading-[18px] relative"><svg width="12" height="12" viewBox="0 0 12 12" className="absolute left-[3px] top-[4px]"><path d="M1.500 6l3 4.500L10.500 1" fill="none" stroke="#333" strokeWidth="1.800" /></svg>Text data</div>
          <div className="h-[18px] pl-[18px] leading-[18px]">Whole number</div>
          <div className="h-[18px] pl-[18px] leading-[18px] text-white tracking-[.1px] bg-linear-to-b from-[#6a94f0] to-[#2a5ee0]">Decimal number</div>
          <div className="h-[18px] pl-[18px] leading-[18px]">Date</div>
        </div>
      </Group>
      <div className="h-[28px] pl-[8px] flex items-end pb-[1px] leading-[18px]">Attributes list</div>
      <Group cls="h-[201px] px-[11px] pt-[11px] flex flex-col">
        <div className="w-[398px] h-[145px] border border-[#a8a8a8] bg-white flex flex-col">
          <div className="h-[17px] pt-[1px] flex-none grid grid-cols-[100px_100px_100px_96px] border-b border-[#b8b8b8] bg-linear-to-b from-[#ffffff] to-[#e8e8e8] items-center">
            {['Name', 'Type', 'Width', 'Precision'].map((h, i) => <span key={h} className={i ? 'pl-[3px] border-l border-[#aaa] leading-[15px]' : 'pl-[4px] leading-[15px]'}>{h}</span>)}
          </div>
          <div className="h-[18px] flex-none grid grid-cols-[100px_100px_100px_96px] items-center"><span className="pl-[5px]">id</span><span className="pl-[5px]">Integer</span><span className="pl-[5px]">10</span><span /></div>
          <div className="h-[18px] flex-none bg-[#ebf1fc]" />
          <div className="h-[18px] flex-none" />
          <div className="h-[18px] flex-none bg-[#ebf1fc]" />
          <div className="h-[18px] flex-none" />
          <div className="h-[18px] flex-none bg-[#ebf1fc]" />
          <div className="flex-1 border-t border-[#e0e0e0] bg-[#fafafa] px-[2px] flex items-center pt-[3px]"><div className="h-[8px] w-full rounded-full bg-[#bcbcbc]" /></div>
        </div>
        <div className="mt-[6px] self-end w-[146px] h-[26px] pt-[2px] border border-[#c2c2c2] flex items-center pl-[5px] gap-[3px] text-[#6e6e6e] tracking-[.2px]">
          <svg width="16" height="16" viewBox="0 0 16 16" className="flex-none -mt-[2px]"><rect x="1" y="1" width="12" height="13" fill="#eee" stroke="#bbb" /><path d="M5 1v13" stroke="#e6d96a" strokeWidth="2.500" /><path d="M8 4h4M8 7h4M8 10h4" stroke="#bbb" /><rect x="10" y="10" width="6" height="6" fill="#ea9a9a" /><path d="M11.500 11.500l3 3M14.500 11.500l-3 3" stroke="#fff" /></svg>
          <span>Remove attribute</span>
        </div>
      </Group>
      <div className="mt-[16px] h-[21px] flex items-center">
        <Aqua cls="w-[59px] h-[21px]">Help</Aqua>
        <Aqua cls="ml-[211px] w-[69px] h-[21px]">Cancel</Aqua>
        <div className="ml-[14px] w-[69px] h-[21px] pt-[1px] rounded-[4px] border border-[#4a6f9e] flex items-center justify-center bg-linear-to-b from-[#c5dcf5] via-[#7cb8ee] to-[#b6dcfa]">OK</div>
      </div>
    </div>
  </div>
);

const Status = () => (
  <div className="h-[32px] flex-none bg-[#e9e9e9] border-t border-[#a8a8a8] flex items-center justify-end pr-[27px] text-[13px] text-[#111] relative">
    <div className="w-[18px] h-[18px] border border-[#c0c0c0] flex items-center justify-center"><svg width="14" height="16" viewBox="0 0 14 16"><circle cx="7" cy="10" r="4.500" fill="none" stroke="#222" strokeWidth="2" /><path d="M2 1l10 10M4 3l6-2" stroke="#222" strokeWidth="2" /><circle cx="7" cy="10" r="1.500" fill="#222" /></svg></div>
    <span className="ml-[10px] w-[73px] whitespace-nowrap">Coordinate:</span>
    <div className="ml-[10px] w-[299px] h-[19px] bg-white border border-[#b5b5b5] flex items-center justify-center tracking-[.7px]">410003,5083873</div>
    <span className="ml-[9px] w-[33px] tracking-[.2px]">Scale</span>
    <div className="ml-[12px] w-[95px] h-[16px] bg-white border border-[#a5a5a5] flex items-center justify-between mt-[2px]"><span className="pl-[2px] text-[13px] leading-[14px] pt-[2px] tracking-[.7px]">1:6,442</span><div className="w-[14px] h-full border-l border-[#bbb] flex items-center justify-center"><svg width="6" height="5" viewBox="0 0 6 5"><path d="M0 0h6L3 5z" fill="#555" /></svg></div></div>
    <div className="ml-[6px] w-[14px] h-[14px] border border-[#777] bg-white rounded-[2px] flex items-center justify-center"><svg width="14" height="14" viewBox="0 0 14 14" className="overflow-visible"><path d="M3 7l3 5 5-13" fill="none" stroke="#222" strokeWidth="1.800" /></svg></div>
    <span className="ml-[4px] w-[44px]">Render</span>
    <span className="ml-[6px] w-[76px] text-[#444] whitespace-nowrap tracking-[.4px]">EPSG:26920</span>
    <div className="ml-[10px] w-[18px] h-[18px] border border-[#c8c8c8] flex items-center justify-center"><svg width="16" height="16" viewBox="0 0 16 16"><circle cx="8" cy="8" r="7" fill="#888" /><circle cx="8" cy="8" r="3.500" fill="#ddd" /><path d="M8 1v14M1 8h14" stroke="#bbb" /></svg></div>
    <div className="ml-[9px] w-[17px] h-[18px] border border-[#c8c8c8] flex items-center justify-center"><svg width="13" height="13" viewBox="0 0 13 13"><path d="M6.500 1L12.500 12H.5z" fill="#f4ea8a" stroke="#666" /><path d="M6.500 4.500v4M6.500 9.500v1.500" stroke="#333" /></svg></div>
    <svg width="10" height="10" viewBox="0 0 10 10" className="absolute right-0 bottom-0"><path d="M2 10l8-8M5 10l5-5M8 10l2-2" stroke="#999" /></svg>
  </div>
);

const Apple = () => <svg width="16" height="18" viewBox="0 0 16 18"><path d="M11 1c.2 1.800-1.400 3.500-3 3.400C7.800 2.700 9.400 1.100 11 1zM13.400 13.500c-.8 1.800-2 3.700-3.400 3.700-1.200 0-1.600-.8-3-.8s-1.900.8-3 .8c-1.700 0-4-3.800-4-7.200C0 7 2 5 4.100 5c1.300 0 2.300.9 3 .9S9 4.900 10.500 4.900c1.100 0 2.500.6 3.300 1.900-2.600 1.600-2.200 5.300-.4 6.700z" fill="#111" /></svg>;
const HGrip = ({ cls = '' }) => <svg width="24" height="4" viewBox="0 0 24 4" className={`flex-none ${cls}`}><path d="M0 1h24" stroke="#f8f8f8" strokeWidth="2" strokeDasharray="2 2" /><path d="M1 3h24" stroke="#aaa" strokeDasharray="2 2" /></svg>;

export default function App() {
  return (
    <div className="w-[1440px] h-[900px] overflow-hidden relative flex flex-col bg-[#111827] font-['Noto_Sans',sans-serif]">
      <div className="h-[22px] flex-none bg-linear-to-b from-[#d9dbe1] via-[#c4c8d2] to-[#a3a8b6] border-b border-black flex items-center text-[14px] text-[#111] whitespace-nowrap">
        <div className="ml-[19px] w-[35px]"><Apple /></div>
        <b className="font-bold">QGIS</b>
        <div className="ml-[18px] flex gap-[19px]">
          {['Project', 'Edit', 'View', 'Layer', 'Settings', 'Plugins', 'Vector', 'Raster', 'Database', 'Web', 'Processing', 'Window', 'Help'].map((m) => <span key={m}>{m}</span>)}
        </div>
        <div className="ml-auto flex items-center h-full">
          <svg width="18" height="16" viewBox="0 0 18 16" className="mr-[13px]"><path d="M5 1l4 3-4 3-4-3zM13 1l4 3-4 3-4-3zM5 7l4 3-4 3-4-3zM13 7l4 3-4 3-4-3zM9 11l3.500 2.500L9 16l-3.500-2.500z" fill="#111" /></svg>
          <svg width="16" height="16" viewBox="0 0 16 16" className="mr-[12.5px]"><rect x="1" y="1" width="9" height="9" rx="1.500" fill="#fff" stroke="#111" strokeWidth="1.800" /><rect x="6" y="6" width="9" height="9" rx="1.500" fill="#fff" stroke="#111" strokeWidth="1.800" /><path d="M7 7l5 5" stroke="#111" strokeWidth="1.500" /></svg>
          <svg width="19" height="16" viewBox="0 0 19 16" className="mr-[12px]"><rect x="1" y="1" width="17" height="11" fill="#333" stroke="#111" /><path d="M7 13h5v1.500H7z" fill="#111" /><path d="M4 15h11" stroke="#111" strokeWidth="1.300" /></svg>
          <svg width="17" height="16" viewBox="0 0 17 16" className="mr-[15.5px]"><path d="M3 8a6 6 0 1 1 2 4.500" fill="none" stroke="#111" strokeWidth="1.600" /><path d="M0 7l3 3 3-3z" fill="#111" /><path d="M9 4v5M9 10.500v1.500" stroke="#111" strokeWidth="1.800" /></svg>
          <svg width="10" height="15" viewBox="0 0 10 15" className="mr-[15px] opacity-40"><path d="M1 4l7 7-3 3V1l3 3-7 7" fill="none" stroke="#333" strokeWidth="1.300" /></svg>
          <svg width="20" height="15" viewBox="0 0 20 15" className="mr-[11px]"><path d="M1 5q9-7 18 0M4 8q6-5 12 0M7 11q3-2.500 6 0" fill="none" stroke="#111" strokeWidth="2" /><circle cx="10" cy="13.500" r="1.400" fill="#111" /></svg>
          <svg width="12" height="11" viewBox="0 0 12 11" className="mr-[18px]"><path d="M0 3h3l4-3v11l-4-3H0z" fill="#111" /><path d="M9 3q2 2.500 0 5" fill="none" stroke="#111" /></svg>
          <svg width="21" height="12" viewBox="0 0 21 12" className="mr-[7px]"><rect x="1" y="1" width="17" height="10" rx="1.500" fill="#ccd" stroke="#111" strokeWidth="1.300" /><path d="M3 7h3l2-3 3 5 2-3h3" fill="none" stroke="#111" /><rect x="18.500" y="4" width="2" height="4" fill="#111" /></svg>
          <span className="text-[12px] w-[33px] mr-[12px]">(0:30)</span>
          <span className="w-[91px] mr-[16px]">Mon 1:26 AM</span>
          <Search size={17} strokeWidth={2.400} className="mr-[19px] text-[#111]" />
        </div>
      </div>
      <div className="h-[21px] flex-none relative flex items-center pl-[8px] bg-linear-to-b from-[#f5f5f5] to-[#dedede] border-b border-[#9c9c9c]">
        <Lights gray />
        <span className="absolute left-0 right-0 mt-[2px] text-center text-[13px] text-[#777] tracking-[.37px]">QGIS 2.6.1-Brighton</span>
      </div>
      <Row>
        {render(R1)}
        <div className="ml-[11px] w-[46px] h-[33px] -mt-[3px] self-end flex-none flex items-center pl-[7px] bg-linear-to-b from-[#c4c4c4] to-[#9e9e9e]">
          <div className="w-[32px] h-[32px]"><Ic><rect x="4" y="4" width="25" height="21" fill="#e6e6e6" stroke="#333" strokeDasharray="2 1.500" /><rect x="6" y="6" width="16" height="16" fill="#f7dc2e" /><Cursor x="13" y="13" /><Arrow x="34" y="17" /></Ic></div>
        </div>
        {render(R1b)}
      </Row>
      <Row>{render(R2)}</Row>
      <Row>
        {render(R3)}
        <div className="ml-[7px] h-[30px] -mt-[3px] border-l border-dotted border-[#555]" />
        {render(R3b)}
      </Row>
      <div className="flex-1 flex min-h-0">
        <div className="w-[48px] flex-none bg-linear-to-r from-[#f0f0f0] via-[#e2e2e2] to-[#b5b5b5] border-t border-[#8a8a8a] flex flex-col pl-[7px]">
          <HGrip cls="mt-[2px] mb-[7px] ml-[1px]" />
          {Left.slice(0, 11).map((ic, i) => <div key={i} className={`w-[32px] h-[32px] flex-none ${i ? 'mt-[6px]' : ''}`}>{ic}</div>)}
          <HGrip cls="mt-[8px] mb-[2px] ml-[1px]" />
          {Left.slice(11).map((ic, i) => <div key={i} className={`w-[32px] h-[32px] flex-none ${i ? 'mt-[6px]' : ''}`}>{ic}</div>)}
        </div>
        <Panel />
        <MapView />
      </div>
      <Status />
      <div className="h-[4px] flex-none bg-[#0d1420]" />
      <Dialog />
    </div>
  );
}
